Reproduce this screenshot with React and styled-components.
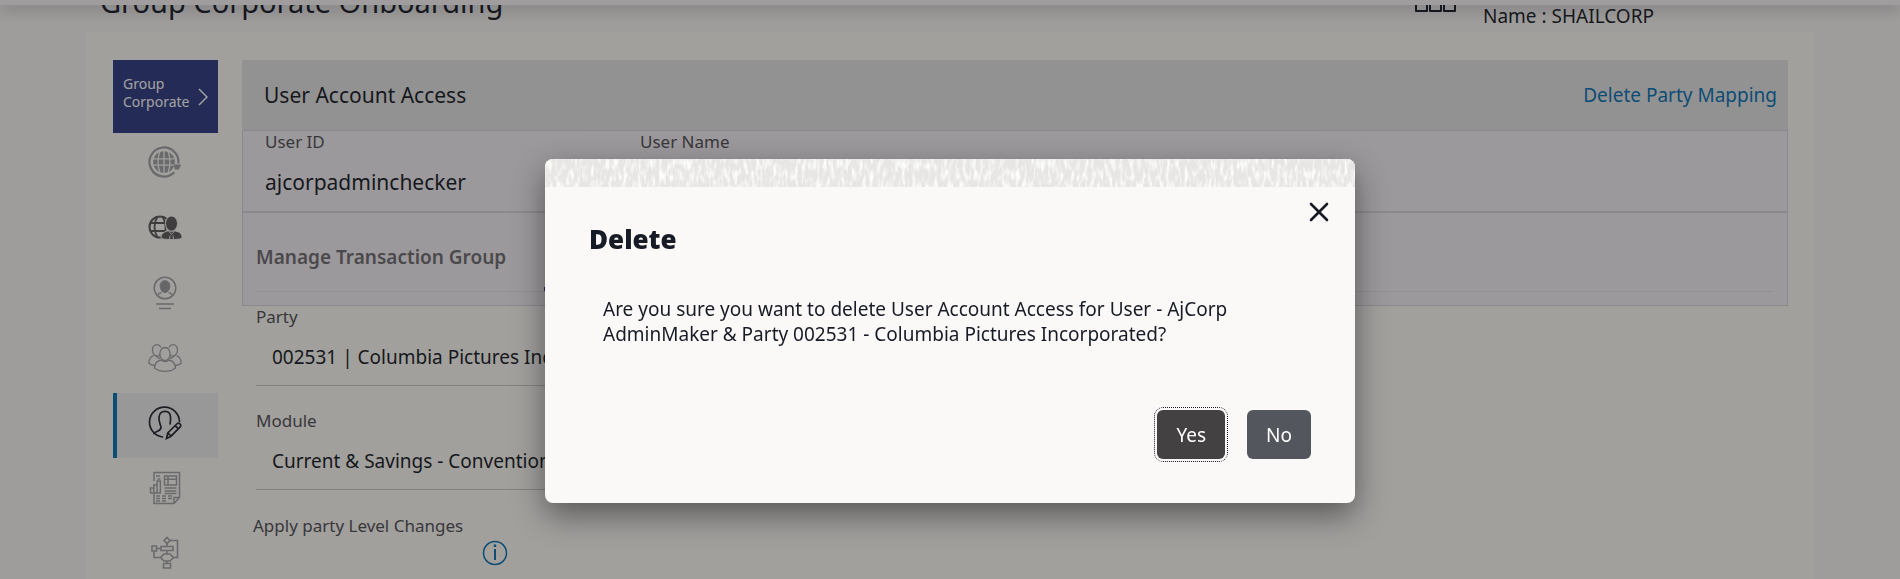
import React, { useState } from "react";
import styled, { createGlobalStyle } from "styled-components";

const GlobalStyle = createGlobalStyle`
  * {
    box-sizing: border-box;
  }

  html {
    height: 100%;
    overflow: hidden;
  }

  body {
    margin: 0;
    height: 100%;
    background: #f9f9f6;
    color: #161b26;
    font-family: "Noto Sans", "Open Sans", sans-serif;
  }

  button, select {
    font-family: inherit;
  }
`;

const GlobeIcon = () => (
  <svg width="34" height="34" viewBox="0 0 34 34" fill="none" stroke="#a2a4a7">
    <path d="M26.3 26.2A14.500 14.500 0 1 1 30.400 17.500" strokeWidth="2.2" />
    <path d="M25.800 18.500h7.400l-2.400 5h-4z" fill="#a2a4a7" strokeWidth="0" />
    <circle cx="16" cy="16" r="10.800" fill="#a2a4a7" strokeWidth="0" />
    <path
      d="M4 12.800h22M4 19.200h22M16 5v22M12 5q-4 11 0 22M20 5q4 11 0 22"
      stroke="#fbfbf7"
      strokeWidth="1.300"
    />
  </svg>
);

const GlobeUserIcon = () => (
  <svg width="34" height="34" viewBox="0 0 34 34" fill="none" stroke="#5b595a">
    <circle cx="12" cy="16" r="10.5" strokeWidth="2" />
    <path d="M2 12h19M2 20h15M9.500 5.500q-6 10.500 0 21M14.500 5.500q5 9 2 19" strokeWidth="1.800" />
    <g fill="#5b595a" stroke="#fbfbf7" strokeWidth="1">
      <path d="M13 27c0-4 2.500-6 6.500-7h8c4.500 1 6.500 3 6.500 7 0 2-21 2-21 0z" />
      <ellipse cx="23.500" cy="12.600" rx="6" ry="7.600" />
    </g>
    <path d="M21 20.500l2.500 3 2.500-3M22 24.500l-.5 4M25 24.500l.5 4" stroke="#e8e8e6" strokeWidth="1" />
  </svg>
);

const ProfileIcon = () => (
  <svg width="34" height="34" viewBox="0 0 34 34" fill="none" stroke="#a2a4a7">
    <circle cx="17" cy="12" r="10.800" strokeWidth="1.500" />
    <path d="M9.500 19.500q1-2.500 4-3M24.500 19.500q-1-2.500-4-3" strokeWidth="1.500" />
    <path d="M12.200 11c-.5-4 1.800-6.300 4.800-6.300s5.300 2.300 4.800 6.300c-.5 3-2.300 5.500-4.800 5.500s-4.300-2.500-4.800-5.500z" fill="#9b9da0" />
    <path d="M8 28h18M11 32.500h12" strokeWidth="1.500" />
  </svg>
);

const GroupIcon = () => (
  <svg width="34" height="34" viewBox="0 0 34 34" fill="none" stroke="#a2a4a7" strokeWidth="1.300">
    <ellipse cx="17" cy="13" rx="5.200" ry="6.500" />
    <path d="M13 19c-4 1-6.500 4-6.500 8 6 4.500 15 4.500 21 0 0-4-2.500-7-6.500-8q-4 3-8 0z" />
    <path d="M13 6.500c-1.500-3.500-6-4-8-.5-1.500 4 0 8.500 4 9.200 1.500 0 2.500-.7 3-1.700" />
    <path d="M21 6.500c1.500-3.500 6-4 8-.5 1.500 4 0 8.500-4 9.200-1.500 0-2.500-.7-3-1.700" />
    <path d="M5.500 14.500C2 16 .8 19 .8 22.200q2.500 2 6 2.300M28.500 14.500c3.500 1.500 4.700 4.500 4.700 7.700q-2.500 2-6 2.300M8 15.200q1.500 2 4 2.300M26 15.200q-1.500 2-4 2.300" />
  </svg>
);

const EditUserIcon = () => (
  <svg width="34" height="34" viewBox="0 0 34 34" fill="none" stroke="#24242e" strokeWidth="1.700" strokeLinecap="round">
    <path d="M14.500 31A15 15 0 1 1 31.500 15.500" />
    <path d="M6 27.500c2-2.500 5-1.500 6.800-5 .7-2-.8-3.500-1-5.500-1.300-4-.8-8 1-10.200 2-1.800 6.500-1.800 8.300 0 1.900 2.500 1.700 7 1 11" />
    <path d="M18.500 32.500l1.300-5.500 9-9c1-1 2.200-1 3.200 0s1 2.200 0 3.200l-9 9zM20 27l3 3M27.200 19.600l3.200 3.200" />
  </svg>
);

const ReportIcon = () => (
  <svg width="34" height="34" viewBox="0 0 34 34" fill="none" stroke="#a2a4a7" strokeWidth="1.500">
    <path d="M6 10V1.500h25.500v25L26 32.500H6V23M31.500 26.500H26v6" />
    <path d="M2.500 22V17h3.300v5M5.800 17v-3h3.300v8M9.100 14v-4h3.300v12M2 22h11" />
    <path d="M16.500 5h12v9h-12zM20 5v9M16.500 8.200h12M8 5h4M9.500 8h3M16.500 17h12M16.500 20h12M16.500 22.500h12" />
    <path d="M8 25h4M14 25h4M20 25h4M8 27.600h4M14 27.600h4M20 27.600h4M8 30h4M14 30h4" />
  </svg>
);

const FlowIcon = () => (
  <svg width="34" height="34" viewBox="0 0 34 34" fill="none" stroke="#a2a4a7" strokeWidth="1.600">
    <path d="M19 1.500l3 3-3 3-3-3zM13 10.500h12v4H13zM4 10h4.500v5H4zM15.500 27.500h7V32h-7zM12.500 21.500l3.500-3.500h6l3.500 3.500L22 25h-6z" />
    <path d="M19 7.500v3M19 14.500V18M19 25v2.500M8.500 12.500H13M6 15v6.500h6.500M22 4.500h7.500v17h-4" />
  </svg>
);

const ChevronIcon = () => (
  <svg width="10" height="18" viewBox="0 0 10 18" fill="none" stroke="#fff" strokeWidth="1.500">
    <path d="M1 1l8 8-8 8" />
  </svg>
);

const BuildingIcon = () => (
  <svg width="42" height="36" viewBox="0 0 42 36" fill="none" stroke="#161b26" strokeWidth="2" strokeLinejoin="round">
    <path d="M1 22h11v13H1zM15 22h11v13H15zM29 22h11v13H29zM7 22V12h28v10M21 12V2" />
  </svg>
);

const InfoIcon = () => (
  <svg width="26" height="26" viewBox="0 0 26 26" fill="none" stroke="#0573b6" strokeWidth="1.500">
    <circle cx="13" cy="13" r="11.500" />
    <path d="M13 9v11" strokeWidth="2" />
    <path d="M13 4.500v2.500" strokeWidth="2.400" />
  </svg>
);

const CloseIcon = () => (
  <svg width="20" height="20" viewBox="0 0 20 20" fill="none" stroke="#161b26" strokeWidth="2.600" strokeLinecap="round">
    <path d="M2 2l16 16M18 2L2 18" />
  </svg>
);

const StripTexture = () => (
  <svg width="100%" height="28" aria-hidden="true">
    <filter id="grain" x="0" y="0" width="100%" height="100%">
      <feTurbulence type="fractalNoise" baseFrequency="0.28 0.09" numOctaves="2" seed="8" />
      <feColorMatrix values="0 0 0 0 0.98  0 0 0 0 0.98  0 0 0 0 0.97  3 0 0 0 -1.3" />
    </filter>
    <rect width="100%" height="100%" fill="#e7e6e4" />
    <rect width="100%" height="100%" filter="url(#grain)" />
  </svg>
);

const menu = [
  { label: "Global view", Icon: GlobeIcon },
  { label: "Global users", Icon: GlobeUserIcon },
  { label: "Profile", Icon: ProfileIcon },
  { label: "User groups", Icon: GroupIcon },
  { label: "User account access", Icon: EditUserIcon },
  { label: "Reports", Icon: ReportIcon },
  { label: "Workflow", Icon: FlowIcon },
];

const DeleteDialog = ({ onClose }) => (
  <Overlay>
    <Dialog role="dialog" aria-modal="true" aria-labelledby="dialog-title">
      <StripTexture />
      <CloseRow>
        <CloseButton aria-label="Close" onClick={onClose}>
          <CloseIcon />
        </CloseButton>
      </CloseRow>
      <DialogTitle id="dialog-title">Delete</DialogTitle>
      <DialogText>
        Are you sure you want to delete User Account Access for User - AjCorp
        AdminMaker &amp; Party 002531 - Columbia Pictures Incorporated?
      </DialogText>
      <DialogActions>
        <DialogButton $focused onClick={onClose}>Yes</DialogButton>
        <DialogButton onClick={onClose}>No</DialogButton>
      </DialogActions>
    </Dialog>
  </Overlay>
);

const App = () => {
  const [active, setActive] = useState(4);
  const [open, setOpen] = useState(true);

  return (
    <>
      <GlobalStyle />
      <TopBar />
      <PageHeader>
        <PageTitle>Group Corporate Onboarding</PageTitle>
        <Corporate>
          <BuildingIcon />
          <CorporateName>Name : SHAILCORP</CorporateName>
        </Corporate>
      </PageHeader>
      <Panel>
        <Sidebar>
          <GroupTile>
            <span>Group Corporate</span>
            <ChevronIcon />
          </GroupTile>
          {menu.map(({ label, Icon }, index) => (
            <MenuButton
              key={label}
              aria-label={label}
              $active={index === active}
              onClick={() => setActive(index)}
            >
              <Icon />
            </MenuButton>
          ))}
        </Sidebar>
        <Content>
          <SectionHeader>
            <SectionTitle>User Account Access</SectionTitle>
            <DeleteLink href="#delete" onClick={() => setOpen(true)}>
              Delete Party Mapping
            </DeleteLink>
          </SectionHeader>
          <UserRow>
            <UserField>
              <Label as="span">User ID</Label>
              <UserValue>ajcorpadminchecker</UserValue>
            </UserField>
            <UserField>
              <Label as="span">User Name</Label>
            </UserField>
          </UserRow>
          <ManageRow>
            <ManageTitle>Manage Transaction Group</ManageTitle>
            <TabTrack>
              <TabIndicator />
            </TabTrack>
          </ManageRow>
          <Field>
            <Label htmlFor="party">Party</Label>
            <Select id="party">
              <option>002531 | Columbia Pictures Incorporated</option>
            </Select>
          </Field>
          <Field>
            <Label htmlFor="module">Module</Label>
            <Select id="module">
              <option>Current &amp; Savings - Conventional</option>
            </Select>
          </Field>
          <ApplyGroup>
            <Label as="span">Apply party Level Changes</Label>
            <InfoButton aria-label="Information">
              <InfoIcon />
            </InfoButton>
          </ApplyGroup>
        </Content>
      </Panel>
      {open && <DeleteDialog onClose={() => setOpen(false)} />}
    </>
  );
};

const TopBar = styled.header`
  position: relative;
  z-index: 1;
  height: 5px;
  background: #fbf9f8;
  box-shadow: 0 4px 14px rgba(40, 34, 60, 0.4);
`;

const PageHeader = styled.div`
  display: flex;
  justify-content: space-between;
  align-items: flex-end;
  height: 27px;
  padding: 0 86px;
  overflow: hidden;
`;

const PageTitle = styled.h1`
  margin: 0 0 10px 14px;
  font-size: 29px;
  line-height: 40px;
  font-weight: 400;
`;

const Corporate = styled.div`
  display: flex;
  align-items: flex-end;
  gap: 26px;
  margin-right: 160px;

  svg {
    margin-bottom: 20px;
  }
`;

const CorporateName = styled.span`
  padding-bottom: 5px;
  font-size: 19px;
  line-height: 22px;
`;

const Panel = styled.main`
  display: flex;
  gap: 24px;
  margin: 0 86px;
  padding: 28px 26px 28px 27px;
  background: #fdfdf9;
`;

const Sidebar = styled.nav`
  display: flex;
  flex-direction: column;
  flex: 0 0 105px;
`;

const GroupTile = styled.button`
  display: flex;
  align-items: flex-start;
  justify-content: space-between;
  height: 73px;
  padding: 15px 10px;
  border: none;
  background: #2d3b83;
  color: #fff;
  font-size: 14px;
  line-height: 18px;
  text-align: left;
  cursor: pointer;

  svg {
    flex-shrink: 0;
    align-self: center;
  }
`;

const MenuButton = styled.button`
  display: flex;
  align-items: center;
  justify-content: center;
  height: 65px;
  padding: 0 6px 6px 0;
  border: none;
  border-left: 4px solid ${({ $active }) => ($active ? "#0573b6" : "transparent")};
  background: ${({ $active }) => ($active ? "#f1f1f0" : "none")};
  cursor: pointer;
`;

const Content = styled.section`
  flex: 1;
  min-width: 0;
`;

const SectionHeader = styled.div`
  display: flex;
  align-items: center;
  justify-content: space-between;
  height: 70px;
  padding: 0 11px 0 22px;
  background: #e6e6e6;
`;

const SectionTitle = styled.h2`
  margin: 0;
  font-size: 21px;
  font-weight: 400;
`;

const DeleteLink = styled.a`
  color: #0573b6;
  font-size: 19px;
  text-decoration: none;
`;

const UserRow = styled.div`
  display: flex;
  height: 82px;
  padding-left: 22px;
  border: 1px solid #d9d8e0;
  background: #f5f2f8;
`;

const UserField = styled.div`
  display: flex;
  flex-direction: column;
  width: 375px;
`;

const Label = styled.label`
  color: #4f5055;
  font-size: 17px;
  line-height: 22px;
`;

const UserValue = styled.span`
  padding-top: 15px;
  font-size: 21px;
  line-height: 28px;
`;

const ManageRow = styled.div`
  display: flex;
  flex-direction: column;
  justify-content: space-between;
  height: 94px;
  padding: 30px 13px 13px;
  border: 1px solid #d9d8e0;
  background: #f5f2f8;
`;

const ManageTitle = styled.h3`
  margin: 0;
  color: #6f6d70;
  font-size: 19px;
  line-height: 28px;
  font-weight: 600;
`;

const TabTrack = styled.div`
  padding-left: 288px;
  border-bottom: 1px solid #e6e4ea;
`;

const TabIndicator = styled.div`
  width: 286px;
  height: 4px;
  background: #24329a;
`;

const Field = styled.div`
  display: flex;
  flex-direction: column;
  width: 400px;
  height: 104px;
  margin-left: 14px;
`;

const Select = styled.select`
  appearance: none;
  height: 58px;
  padding: 0 16px;
  border: none;
  border-bottom: 1px solid #cbcbd0;
  border-radius: 0;
  background: none;
  color: #161b26;
  font-size: 19px;
`;

const ApplyGroup = styled.div`
  display: flex;
  flex-direction: column;
  align-items: flex-end;
  gap: 3px;
  width: 255px;
  margin-left: 11px;
  padding-top: 1px;

  span {
    align-self: flex-start;
  }
`;

const InfoButton = styled.button`
  display: flex;
  padding: 0;
  border: none;
  background: none;
  cursor: pointer;
`;

const Overlay = styled.div`
  position: fixed;
  inset: 0;
  z-index: 2;
  display: flex;
  align-items: flex-start;
  justify-content: center;
  padding-top: 159px;
  background: rgba(22, 21, 19, 0.4);
`;

const Dialog = styled.div`
  display: flex;
  flex-direction: column;
  width: 810px;
  max-width: 90%;
  overflow: hidden;
  border-radius: 8px;
  background: #fbf9f8;
  box-shadow: 0 12px 32px rgba(0, 0, 0, 0.45);
`;

const CloseRow = styled.div`
  display: flex;
  justify-content: flex-end;
  padding: 15px 26px 0;
`;

const CloseButton = styled.button`
  display: flex;
  padding: 0;
  border: none;
  background: none;
  cursor: pointer;
`;

const DialogTitle = styled.h2`
  margin: 0;
  padding: 0 44px;
  font-size: 26px;
  line-height: 34px;
  font-weight: 900;
`;

const DialogText = styled.p`
  margin: 0;
  padding: 41px 58px 0;
  font-size: 19px;
  line-height: 25px;
`;

const DialogActions = styled.div`
  display: flex;
  justify-content: flex-end;
  gap: 22px;
  padding: 63px 44px 44px;
`;

const DialogButton = styled.button`
  height: 49px;
  padding: 0 19px;
  border: none;
  border-radius: 6px;
  background: ${({ $focused }) => ($focused ? "#434142" : "#54565e")};
  color: #fff;
  font-size: 19px;
  cursor: pointer;
  ${({ $focused }) => $focused && "outline: 1px dotted #161b26; outline-offset: 2px;"}
`;

export default App;
